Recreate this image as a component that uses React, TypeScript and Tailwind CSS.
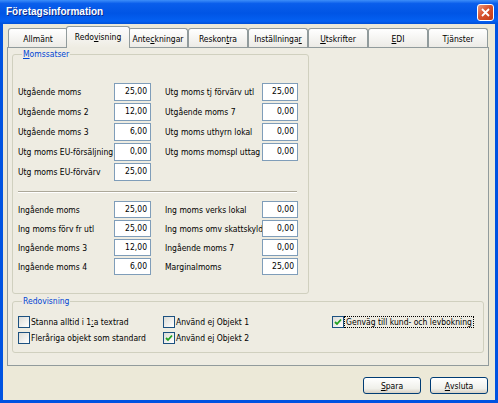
import React from 'react';

const UI = "font-['DejaVu_Sans_Condensed','DejaVu_Sans',sans-serif] text-[8.5px] leading-[10px] text-black";

// text with one underlined access-key letter
const Mn: React.FC<{ text: string; i?: number }> = ({ text, i }) => {
  if (i === undefined) return <>{text}</>;
  return (
    <>
      {text.slice(0, i)}
      <span className="underline underline-offset-[1px]">{text[i]}</span>
      {text.slice(i + 1)}
    </>
  );
};

const TABS: { label: string; u?: number; active?: boolean }[] = [
  { label: 'Allmänt' },
  { label: 'Redovisning', u: 4, active: true },
  { label: 'Anteckningar', u: 4 },
  { label: 'Reskontra', u: 6 },
  { label: 'Inställningar', u: 12 },
  { label: 'Utskrifter', u: 0 },
  { label: 'EDI', u: 0 },
  { label: 'Tjänster' },
];

const UTG_LEFT = [
  ['Utgående moms', '25,00'],
  ['Utgående moms 2', '12,00'],
  ['Utgående moms 3', '6,00'],
  ['Utg moms EU-försäljning', '0,00'],
  ['Utg moms EU-förvärv', '25,00'],
];
const UTG_RIGHT = [
  ['Utg moms tj förvärv utl', '25,00'],
  ['Utgående moms 7', '0,00'],
  ['Utg moms uthyrn lokal', '0,00'],
  ['Utg moms momspl uttag', '0,00'],
];
const ING_LEFT = [
  ['Ingående moms', '25,00'],
  ['Ing moms förv fr utl', '25,00'],
  ['Ingående moms 3', '12,00'],
  ['Ingående moms 4', '6,00'],
];
const ING_RIGHT = [
  ['Ing moms verks lokal', '0,00'],
  ['Ing moms omv skattskyldighet', '0,00'],
  ['Ingående moms 7', '0,00'],
  ['Marginalmoms', '25,00'],
];

const Field: React.FC<{ label: string; value: string; tall?: boolean; wide?: boolean }> = ({ label, value, tall, wide }) => (
  <div className={`flex items-center ${tall ? 'h-[18px]' : 'h-[17px]'}`}>
    <div className={`${wide ? 'w-[97px]' : 'w-[96px]'} overflow-hidden whitespace-nowrap`}>{label}</div>
    <div className={`${wide ? 'w-[36px]' : 'w-[37px]'} h-full border border-[#7F9DB9] bg-white text-right pr-[3px] pt-[2px]`}>{value}</div>
  </div>
);

const Check: React.FC<{ checked?: boolean }> = ({ checked }) => (
  <span className="w-[12px] h-[12px] shrink-0 border border-[#1C5180] bg-[linear-gradient(135deg,#DCDCD7,#FFFFFF)] flex items-center justify-center">
    {checked && (
      <svg width="8" height="8" viewBox="0 0 8 8">
        <path d="M1 4 L3 6 L7 1.5" fill="none" stroke="#21A121" strokeWidth="1.8" />
      </svg>
    )}
  </span>
);

const Button: React.FC<{ label: string }> = ({ label }) => (
  <button className="w-[58px] h-[17px] rounded-[3px] border border-[#003C74] bg-[linear-gradient(to_bottom,#FFFFFF,#F0F0EA_70%,#D6D0C5)] flex items-center justify-center">
    <Mn text={label} i={0} />
  </button>
);

export default function App() {
  return (
    <div className={`w-[498px] h-[403px] flex flex-col bg-[#0053E1] ${UI}`}>
      {/* title bar */}
      <div className="h-[24px] shrink-0 flex items-center justify-between pl-[6px] pr-[4px] bg-[linear-gradient(to_bottom,#3D8EF9_0%,#0A5EEB_15%,#0055E5_55%,#0460F2_88%,#0050D8_100%)]">
        <span className="font-['Liberation_Sans',sans-serif] font-bold text-[10px] text-white [text-shadow:1px_1px_0_#0A2A8A]">
          Företagsinformation
        </span>
        <div className="w-[17px] h-[17px] rounded-[3px] border border-white bg-[linear-gradient(135deg,#EE9A7E,#D8532E_45%,#C23B14)] flex items-center justify-center">
          <svg width="9" height="9" viewBox="0 0 9 9">
            <path d="M1 1 L8 8 M8 1 L1 8" stroke="white" strokeWidth="1.8" />
          </svg>
        </div>
      </div>

      {/* client area */}
      <div className="flex-1 mx-[3px] mb-[3px] bg-[#ECE9D8] px-[4px] pt-[4px] flex flex-col">
        {/* tabs */}
        <div className="flex h-[19px] pl-[1px]">
          {TABS.map((t) =>
            t.active ? (
              <div key={t.label} className="relative w-[60px] h-full">
                <div className="absolute -left-[2px] -right-[2px] -top-[2px] -bottom-[1px] z-10 rounded-t-[3px] border border-b-0 border-[#919B9C] bg-[linear-gradient(to_bottom,#FCFCFE,#EEECE2)] flex items-center justify-center pb-[1px]">
                  <Mn text={t.label} i={t.u} />
                </div>
              </div>
            ) : (
              <div
                key={t.label}
                className="w-[60px] h-full rounded-t-[3px] border border-b-0 border-[#919B9C] bg-[linear-gradient(to_bottom,#FFFFFF,#ECEBE6)] flex items-center justify-center pt-[1px]"
              >
                <Mn text={t.label} i={t.u} />
              </div>
            )
          )}
        </div>

        {/* tab page */}
        <div className="w-[482px] h-[319px] border border-[#919B9C] bg-[#EEECE2] px-[4px] flex flex-col">
          <fieldset className="mt-[1px] w-[297px] rounded-[3px] border border-[#D0D0BF] pl-[5px] pr-[10px] pb-[18px]">
            <legend className="ml-[4px] px-[1px] text-[#0046D5]">
              <Mn text="Momssatser" i={0} />
            </legend>

            <div className="pt-[24px] flex gap-[14px]">
              <div className="flex flex-col gap-[2px]">
                {UTG_LEFT.map(([l, v]) => (
                  <Field key={l} label={l} value={v} tall />
                ))}
              </div>
              <div className="flex flex-col gap-[2px]">
                {UTG_RIGHT.map(([l, v]) => (
                  <Field key={l} label={l} value={v} tall wide />
                ))}
              </div>
            </div>

            <div className="mt-[10px] h-[2px] border-t border-[#ACA899] border-b border-b-white mr-[1px]" />

            <div className="pt-[8px] flex gap-[14px]">
              <div className="flex flex-col gap-[2px]">
                {ING_LEFT.map(([l, v]) => (
                  <Field key={l} label={l} value={v} />
                ))}
              </div>
              <div className="flex flex-col gap-[2px]">
                {ING_RIGHT.map(([l, v]) => (
                  <Field key={l} label={l} value={v} wide />
                ))}
              </div>
            </div>
          </fieldset>

          <fieldset className="mt-[2px] w-[472px] rounded-[3px] border border-[#D0D0BF] pl-[5px] pb-[8px]">
            <legend className="ml-[4px] px-[1px] text-[#0046D5]">Redovisning</legend>
            <div className="pt-[10px] grid grid-cols-[145px_169px_1fr] gap-y-[4px]">
              <label className="flex items-center gap-[1px] h-[12px]">
                <Check />
                <span><Mn text="Stanna alltid i 1:a textrad" i={17} /></span>
              </label>
              <label className="flex items-center gap-[1px] h-[12px]">
                <Check />
                <span>Använd ej Objekt 1</span>
              </label>
              <label className="flex items-center gap-[0px] h-[12px]">
                <Check checked />
                <span className="border border-dotted border-black px-[1px] leading-[10px]">Genväg till kund- och levbokning</span>
              </label>
              <label className="flex items-center gap-[1px] h-[12px]">
                <Check />
                <span>Fleråriga objekt som standard</span>
              </label>
              <label className="flex items-center gap-[1px] h-[12px]">
                <Check checked />
                <span>Använd ej Objekt 2</span>
              </label>
            </div>
          </fieldset>
        </div>

        {/* dialog buttons */}
        <div className="w-[482px] mt-[11px] flex justify-end gap-[9px] pr-[1px]">
          <Button label="Spara" />
          <Button label="Avsluta" />
        </div>
      </div>
    </div>
  );
}
